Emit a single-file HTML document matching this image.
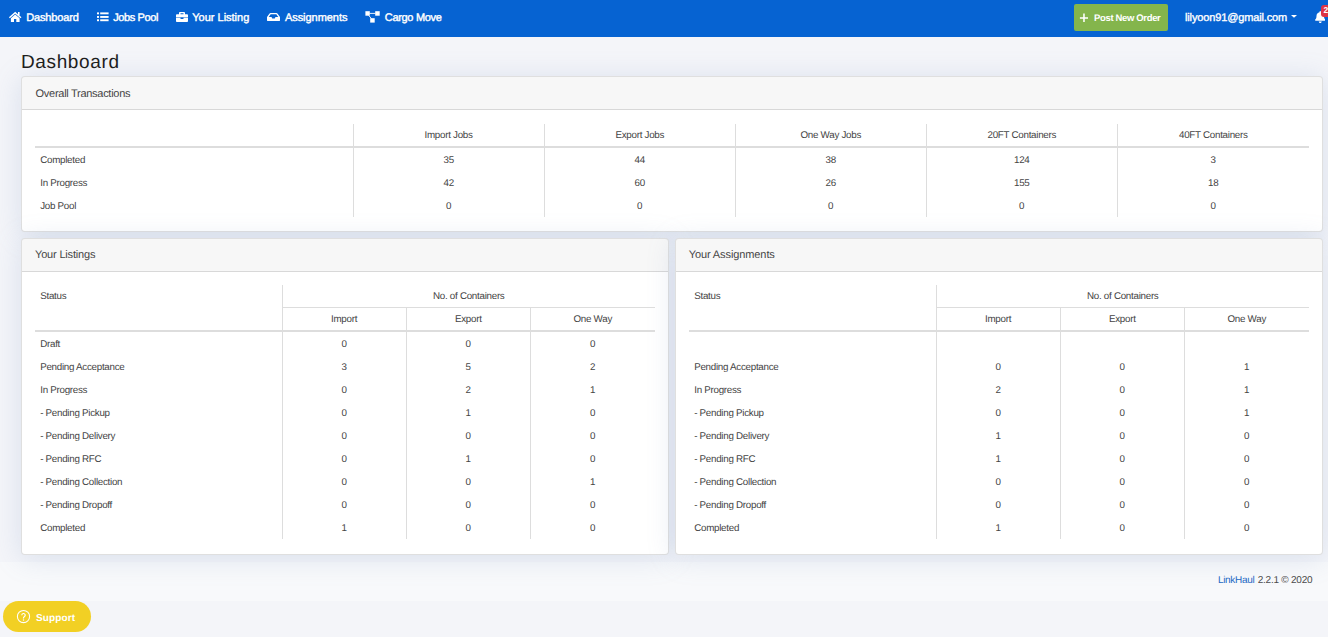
<!DOCTYPE html>
<html><head><meta charset="utf-8"><style>
*{margin:0;padding:0;box-sizing:border-box}
html,body{width:1328px;height:637px;overflow:hidden}
body{font-family:"Liberation Sans",sans-serif;background:#f4f5f9;position:relative;text-rendering:geometricPrecision}
.abs{position:absolute}
.t{position:absolute;line-height:20px;white-space:nowrap}
#nav{position:absolute;left:0;top:0;width:1328px;height:37px;background:#0663d2}
.card{position:absolute;background:#fff;border:1px solid rgba(0,0,0,0.125);border-radius:4px;box-shadow:0 3px 28px rgba(120,145,192,0.22)}
.ch{position:absolute;left:0;top:0;right:0;height:33px;background:rgba(0,0,0,0.03);border-bottom:1px solid rgba(0,0,0,0.125);border-radius:3px 3px 0 0}
</style></head><body>
<div class="abs" style="left:0;top:562px;width:1328px;height:39px;background:#f8f9fb"></div>
<div id="nav">
<svg class="abs" style="left:8px;top:11px" width="15" height="12" viewBox="8 11 15 12"><g fill="#fff"><path d="M9.4 17.7L15.2 12.8L21 17.7" fill="none" stroke="#fff" stroke-width="1.45"/><rect x="18" y="12" width="1.6" height="3.4"/><path d="M10.9 18.3L15.2 14.5L19.6 18.3V21.9H16.3V19.1H14V21.9H10.9Z"/></g></svg>
<svg class="abs" style="left:96px;top:11px" width="14" height="12" viewBox="96 11 14 12"><g fill="#fff"><rect x="97" y="12.4" width="2" height="1.9"/><rect x="97" y="16" width="2" height="1.9"/><rect x="97" y="19.3" width="2" height="1.9"/><rect x="100.2" y="12.4" width="8.4" height="1.9"/><rect x="100.2" y="16" width="8.4" height="1.9"/><rect x="100.2" y="19.3" width="8.4" height="1.9"/></g></svg>
<svg class="abs" style="left:176px;top:12px" width="12" height="10" viewBox="0 0 512 480" preserveAspectRatio="none"><path fill="#fff" d="M320 320c0 8.84-7.16 16-16 16h-96c-8.84 0-16-7.16-16-16v-40H0v152c0 25.6 22.4 48 48 48h416c25.6 0 48-22.4 48-48V280H320v40zm144-216h-80V48c0-25.6-22.4-48-48-48H176c-25.6 0-48 22.4-48 48v56H48c-25.6 0-48 22.4-48 48v104h512V152c0-25.6-22.4-48-48-48zm-144 0H192V64h128v40z"/></svg>
<svg class="abs" style="left:267px;top:12.7px" width="13" height="8.2" viewBox="0 64 576 384" preserveAspectRatio="none"><path fill="#fff" d="M567.938 243.908L462.25 85.374A48.003 48.003 0 0 0 422.311 64H153.689a48 48 0 0 0-39.938 21.374L8.062 243.908A47.994 47.994 0 0 0 0 270.533V400c0 26.51 21.49 48 48 48h480c26.51 0 48-21.49 48-48V270.533a47.994 47.994 0 0 0-8.062-26.625zM162.252 128h251.497l85.333 128H376l-32 64H232l-32-64H76.918l85.334-128z"/></svg>
<svg class="abs" style="left:364px;top:10px" width="17" height="14" viewBox="364 10 17 14"><g fill="#fff"><rect x="365.4" y="11.2" width="4.4" height="4.5"/><rect x="375.2" y="11.2" width="4.5" height="4.5"/><rect x="370.2" y="18.2" width="4.5" height="4.4"/></g><g stroke="#fff" stroke-width="0.9" fill="none"><path d="M369.5 13.4H375.5"/><path d="M368.6 15.3L371.4 18.6"/></g></svg>
<div class="abs" style="left:1074px;top:4px;width:94px;height:27px;background:#84b54c;border-radius:2px"></div>
<svg class="abs" style="left:1079px;top:13px" width="10" height="10" viewBox="1079 13 10 10"><path fill="#fff" d="M1083.2 13.6h1.55v3.6h3.25v1.55h-3.25v3.2h-1.55v-3.2h-3.3v-1.55h3.3z"/></svg>
<svg class="abs" style="left:1290px;top:14px" width="8" height="5" viewBox="1290 14 8 5"><path fill="#fff" d="M1291 15h6l-3 2.8z"/></svg>
<svg class="abs" style="left:1314.5px;top:11px" width="10.5" height="12" viewBox="0 0 448 512" preserveAspectRatio="none"><path fill="#fff" d="M224 512c35.32 0 63.970-28.65 63.97-64H160.03c0 35.35 28.65 64 63.97 64zm215.39-149.71c-19.32-20.76-55.47-51.99-55.47-154.29 0-77.7-54.48-139.9-127.94-155.16V32c0-17.67-14.32-32-31.98-32s-31.98 14.33-31.98 32v20.84C118.56 68.1 64.08 130.3 64.08 208c0 102.3-36.15 133.53-55.47 154.29-6 6.45-8.66 14.16-8.61 21.710.11 16.4 12.98 32 32.1 32h383.8c19.12 0 32-15.6 32.1-32 .05-7.55-2.61-15.27-8.61-21.71z"/></svg>
<div class="abs" style="left:1321px;top:5px;width:12px;height:12px;background:#dc3545;border-radius:3px"></div>
<div class="t" style="left:1323.5px;top:0px;font-size:8.5px;font-weight:700;color:#fff;line-height:20px;">2</div>
</div>
<div class="card" style="left:21px;top:76px;width:1302px;height:156px"><div class="ch"></div></div>
<div class="card" style="left:21px;top:238px;width:648px;height:317px"><div class="ch"></div></div>
<div class="card" style="left:675px;top:238px;width:648px;height:317px"><div class="ch"></div></div>
<div style="position:absolute;left:35px;top:146px;width:1274px;height:2px;background:#dddddd"></div><div style="position:absolute;left:353px;top:124px;width:1px;height:93px;background:#dddddd"></div><div style="position:absolute;left:544px;top:124px;width:1px;height:93px;background:#dddddd"></div><div style="position:absolute;left:735px;top:124px;width:1px;height:93px;background:#dddddd"></div><div style="position:absolute;left:926px;top:124px;width:1px;height:93px;background:#dddddd"></div><div style="position:absolute;left:1117px;top:124px;width:1px;height:93px;background:#dddddd"></div><div style="position:absolute;left:282px;top:285px;width:1px;height:254px;background:#dddddd"></div><div style="position:absolute;left:282px;top:307px;width:373px;height:1px;background:#dddddd"></div><div style="position:absolute;left:406px;top:308px;width:1px;height:231px;background:#dddddd"></div><div style="position:absolute;left:530px;top:308px;width:1px;height:231px;background:#dddddd"></div><div style="position:absolute;left:35px;top:330px;width:620px;height:2px;background:#dddddd"></div><div style="position:absolute;left:936px;top:285px;width:1px;height:254px;background:#dddddd"></div><div style="position:absolute;left:936px;top:307px;width:373px;height:1px;background:#dddddd"></div><div style="position:absolute;left:1060px;top:308px;width:1px;height:231px;background:#dddddd"></div><div style="position:absolute;left:1184px;top:308px;width:1px;height:231px;background:#dddddd"></div><div style="position:absolute;left:689px;top:330px;width:620px;height:2px;background:#dddddd"></div>

<div class="abs" style="left:3px;top:601px;width:88px;height:31px;background:#f2d024;border-radius:15.5px"></div>
<svg class="abs" style="left:16px;top:609px" width="15" height="15" viewBox="16 609 15 15"><circle cx="23.5" cy="616.5" r="6.1" fill="none" stroke="#fff" stroke-width="1.05"/><path d="M21.8 615.2a1.7 1.7 0 1 1 2.5 1.5c-.55.3-.8.6-.8 1.2v.5" fill="none" stroke="#fff" stroke-width="1.2"/><circle cx="23.5" cy="619.9" r=".75" fill="#fff"/></svg>

<div class="t" style="left:26.20px;top:8px;font-size:11px;font-weight:400;color:#ffffff;letter-spacing:-0.138px;-webkit-text-stroke:0.4px #fff">Dashboard</div><div class="t" style="left:113.20px;top:8px;font-size:11px;font-weight:400;color:#ffffff;letter-spacing:-0.388px;-webkit-text-stroke:0.4px #fff">Jobs Pool</div><div class="t" style="left:192.30px;top:8px;font-size:11px;font-weight:400;color:#ffffff;letter-spacing:-0.009px;-webkit-text-stroke:0.4px #fff">Your Listing</div><div class="t" style="left:284.90px;top:8px;font-size:11px;font-weight:400;color:#ffffff;letter-spacing:-0.040px;-webkit-text-stroke:0.4px #fff">Assignments</div><div class="t" style="left:384.80px;top:8px;font-size:11px;font-weight:400;color:#ffffff;letter-spacing:-0.322px;-webkit-text-stroke:0.4px #fff">Cargo Move</div><div class="t" style="left:1094.00px;top:9px;font-size:9.5px;font-weight:700;color:#ffffff;letter-spacing:-0.346px;">Post New Order</div><div class="t" style="left:1185.00px;top:8px;font-size:11px;font-weight:400;color:#ffffff;letter-spacing:-0.139px;-webkit-text-stroke:0.35px #fff">lilyoon91@gmail.com</div><div class="t" style="left:21.00px;top:53px;font-size:19px;font-weight:400;color:#1e1e1e;letter-spacing:0.625px;">Dashboard</div><div class="t" style="left:35.60px;top:84px;font-size:11px;font-weight:400;color:#454545;letter-spacing:-0.284px;">Overall Transactions</div><div class="t" style="left:35.00px;top:245px;font-size:11px;font-weight:400;color:#454545;letter-spacing:-0.175px;">Your Listings</div><div class="t" style="left:688.70px;top:245px;font-size:11px;font-weight:400;color:#454545;letter-spacing:-0.100px;">Your Assignments</div><div class="t" style="left:424.50px;top:126px;font-size:9.8px;font-weight:400;color:#444444;letter-spacing:-0.280px;">Import Jobs</div><div class="t" style="left:615.50px;top:126px;font-size:9.8px;font-weight:400;color:#444444;letter-spacing:-0.280px;">Export Jobs</div><div class="t" style="left:800.50px;top:126px;font-size:9.8px;font-weight:400;color:#444444;letter-spacing:-0.280px;">One Way Jobs</div><div class="t" style="left:987.50px;top:126px;font-size:9.8px;font-weight:400;color:#444444;letter-spacing:-0.280px;">20FT Containers</div><div class="t" style="left:1179.00px;top:126px;font-size:9.8px;font-weight:400;color:#444444;letter-spacing:-0.280px;">40FT Containers</div><div class="t" style="left:40.20px;top:151px;font-size:9.8px;font-weight:400;color:#444444;letter-spacing:-0.280px;">Completed</div><div class="t" style="left:443.50px;top:151px;font-size:9.8px;font-weight:400;color:#444444;letter-spacing:-0.280px;">35</div><div class="t" style="left:634.50px;top:151px;font-size:9.8px;font-weight:400;color:#444444;letter-spacing:-0.280px;">44</div><div class="t" style="left:825.50px;top:151px;font-size:9.8px;font-weight:400;color:#444444;letter-spacing:-0.280px;">38</div><div class="t" style="left:1014.00px;top:151px;font-size:9.8px;font-weight:400;color:#444444;letter-spacing:-0.280px;">124</div><div class="t" style="left:1210.50px;top:151px;font-size:9.8px;font-weight:400;color:#444444;letter-spacing:-0.280px;">3</div><div class="t" style="left:40.20px;top:174px;font-size:9.8px;font-weight:400;color:#444444;letter-spacing:-0.280px;">In Progress</div><div class="t" style="left:443.50px;top:174px;font-size:9.8px;font-weight:400;color:#444444;letter-spacing:-0.280px;">42</div><div class="t" style="left:634.50px;top:174px;font-size:9.8px;font-weight:400;color:#444444;letter-spacing:-0.280px;">60</div><div class="t" style="left:825.50px;top:174px;font-size:9.8px;font-weight:400;color:#444444;letter-spacing:-0.280px;">26</div><div class="t" style="left:1014.00px;top:174px;font-size:9.8px;font-weight:400;color:#444444;letter-spacing:-0.280px;">155</div><div class="t" style="left:1208.00px;top:174px;font-size:9.8px;font-weight:400;color:#444444;letter-spacing:-0.280px;">18</div><div class="t" style="left:40.20px;top:197px;font-size:9.8px;font-weight:400;color:#444444;letter-spacing:-0.280px;">Job Pool</div><div class="t" style="left:446.00px;top:197px;font-size:9.8px;font-weight:400;color:#444444;letter-spacing:-0.280px;">0</div><div class="t" style="left:637.00px;top:197px;font-size:9.8px;font-weight:400;color:#444444;letter-spacing:-0.280px;">0</div><div class="t" style="left:828.00px;top:197px;font-size:9.8px;font-weight:400;color:#444444;letter-spacing:-0.280px;">0</div><div class="t" style="left:1019.00px;top:197px;font-size:9.8px;font-weight:400;color:#444444;letter-spacing:-0.280px;">0</div><div class="t" style="left:1210.50px;top:197px;font-size:9.8px;font-weight:400;color:#444444;letter-spacing:-0.280px;">0</div><div class="t" style="left:40.20px;top:287px;font-size:9.8px;font-weight:400;color:#444444;letter-spacing:-0.280px;">Status</div><div class="t" style="left:433.00px;top:287px;font-size:9.8px;font-weight:400;color:#444444;letter-spacing:-0.280px;">No. of Containers</div><div class="t" style="left:331.00px;top:310px;font-size:9.8px;font-weight:400;color:#444444;letter-spacing:-0.280px;">Import</div><div class="t" style="left:455.00px;top:310px;font-size:9.8px;font-weight:400;color:#444444;letter-spacing:-0.280px;">Export</div><div class="t" style="left:573.50px;top:310px;font-size:9.8px;font-weight:400;color:#444444;letter-spacing:-0.280px;">One Way</div><div class="t" style="left:40.20px;top:335px;font-size:9.8px;font-weight:400;color:#444444;letter-spacing:-0.280px;">Draft</div><div class="t" style="left:341.50px;top:335px;font-size:9.8px;font-weight:400;color:#444444;letter-spacing:-0.280px;">0</div><div class="t" style="left:465.50px;top:335px;font-size:9.8px;font-weight:400;color:#444444;letter-spacing:-0.280px;">0</div><div class="t" style="left:590.00px;top:335px;font-size:9.8px;font-weight:400;color:#444444;letter-spacing:-0.280px;">0</div><div class="t" style="left:40.20px;top:358px;font-size:9.8px;font-weight:400;color:#444444;letter-spacing:-0.280px;">Pending Acceptance</div><div class="t" style="left:341.50px;top:358px;font-size:9.8px;font-weight:400;color:#444444;letter-spacing:-0.280px;">3</div><div class="t" style="left:465.50px;top:358px;font-size:9.8px;font-weight:400;color:#444444;letter-spacing:-0.280px;">5</div><div class="t" style="left:590.00px;top:358px;font-size:9.8px;font-weight:400;color:#444444;letter-spacing:-0.280px;">2</div><div class="t" style="left:40.20px;top:381px;font-size:9.8px;font-weight:400;color:#444444;letter-spacing:-0.280px;">In Progress</div><div class="t" style="left:341.50px;top:381px;font-size:9.8px;font-weight:400;color:#444444;letter-spacing:-0.280px;">0</div><div class="t" style="left:465.50px;top:381px;font-size:9.8px;font-weight:400;color:#444444;letter-spacing:-0.280px;">2</div><div class="t" style="left:590.00px;top:381px;font-size:9.8px;font-weight:400;color:#444444;letter-spacing:-0.280px;">1</div><div class="t" style="left:40.20px;top:404px;font-size:9.8px;font-weight:400;color:#444444;letter-spacing:-0.280px;">- Pending Pickup</div><div class="t" style="left:341.50px;top:404px;font-size:9.8px;font-weight:400;color:#444444;letter-spacing:-0.280px;">0</div><div class="t" style="left:465.50px;top:404px;font-size:9.8px;font-weight:400;color:#444444;letter-spacing:-0.280px;">1</div><div class="t" style="left:590.00px;top:404px;font-size:9.8px;font-weight:400;color:#444444;letter-spacing:-0.280px;">0</div><div class="t" style="left:40.20px;top:427px;font-size:9.8px;font-weight:400;color:#444444;letter-spacing:-0.280px;">- Pending Delivery</div><div class="t" style="left:341.50px;top:427px;font-size:9.8px;font-weight:400;color:#444444;letter-spacing:-0.280px;">0</div><div class="t" style="left:465.50px;top:427px;font-size:9.8px;font-weight:400;color:#444444;letter-spacing:-0.280px;">0</div><div class="t" style="left:590.00px;top:427px;font-size:9.8px;font-weight:400;color:#444444;letter-spacing:-0.280px;">0</div><div class="t" style="left:40.20px;top:450px;font-size:9.8px;font-weight:400;color:#444444;letter-spacing:-0.280px;">- Pending RFC</div><div class="t" style="left:341.50px;top:450px;font-size:9.8px;font-weight:400;color:#444444;letter-spacing:-0.280px;">0</div><div class="t" style="left:465.50px;top:450px;font-size:9.8px;font-weight:400;color:#444444;letter-spacing:-0.280px;">1</div><div class="t" style="left:590.00px;top:450px;font-size:9.8px;font-weight:400;color:#444444;letter-spacing:-0.280px;">0</div><div class="t" style="left:40.20px;top:473px;font-size:9.8px;font-weight:400;color:#444444;letter-spacing:-0.280px;">- Pending Collection</div><div class="t" style="left:341.50px;top:473px;font-size:9.8px;font-weight:400;color:#444444;letter-spacing:-0.280px;">0</div><div class="t" style="left:465.50px;top:473px;font-size:9.8px;font-weight:400;color:#444444;letter-spacing:-0.280px;">0</div><div class="t" style="left:590.00px;top:473px;font-size:9.8px;font-weight:400;color:#444444;letter-spacing:-0.280px;">1</div><div class="t" style="left:40.20px;top:496px;font-size:9.8px;font-weight:400;color:#444444;letter-spacing:-0.280px;">- Pending Dropoff</div><div class="t" style="left:341.50px;top:496px;font-size:9.8px;font-weight:400;color:#444444;letter-spacing:-0.280px;">0</div><div class="t" style="left:465.50px;top:496px;font-size:9.8px;font-weight:400;color:#444444;letter-spacing:-0.280px;">0</div><div class="t" style="left:590.00px;top:496px;font-size:9.8px;font-weight:400;color:#444444;letter-spacing:-0.280px;">0</div><div class="t" style="left:40.20px;top:519px;font-size:9.8px;font-weight:400;color:#444444;letter-spacing:-0.280px;">Completed</div><div class="t" style="left:341.50px;top:519px;font-size:9.8px;font-weight:400;color:#444444;letter-spacing:-0.280px;">1</div><div class="t" style="left:465.50px;top:519px;font-size:9.8px;font-weight:400;color:#444444;letter-spacing:-0.280px;">0</div><div class="t" style="left:590.00px;top:519px;font-size:9.8px;font-weight:400;color:#444444;letter-spacing:-0.280px;">0</div><div class="t" style="left:694.20px;top:287px;font-size:9.8px;font-weight:400;color:#444444;letter-spacing:-0.280px;">Status</div><div class="t" style="left:1087.00px;top:287px;font-size:9.8px;font-weight:400;color:#444444;letter-spacing:-0.280px;">No. of Containers</div><div class="t" style="left:985.00px;top:310px;font-size:9.8px;font-weight:400;color:#444444;letter-spacing:-0.280px;">Import</div><div class="t" style="left:1109.00px;top:310px;font-size:9.8px;font-weight:400;color:#444444;letter-spacing:-0.280px;">Export</div><div class="t" style="left:1227.50px;top:310px;font-size:9.8px;font-weight:400;color:#444444;letter-spacing:-0.280px;">One Way</div><div class="t" style="left:694.20px;top:358px;font-size:9.8px;font-weight:400;color:#444444;letter-spacing:-0.280px;">Pending Acceptance</div><div class="t" style="left:995.50px;top:358px;font-size:9.8px;font-weight:400;color:#444444;letter-spacing:-0.280px;">0</div><div class="t" style="left:1119.50px;top:358px;font-size:9.8px;font-weight:400;color:#444444;letter-spacing:-0.280px;">0</div><div class="t" style="left:1244.00px;top:358px;font-size:9.8px;font-weight:400;color:#444444;letter-spacing:-0.280px;">1</div><div class="t" style="left:694.20px;top:381px;font-size:9.8px;font-weight:400;color:#444444;letter-spacing:-0.280px;">In Progress</div><div class="t" style="left:995.50px;top:381px;font-size:9.8px;font-weight:400;color:#444444;letter-spacing:-0.280px;">2</div><div class="t" style="left:1119.50px;top:381px;font-size:9.8px;font-weight:400;color:#444444;letter-spacing:-0.280px;">0</div><div class="t" style="left:1244.00px;top:381px;font-size:9.8px;font-weight:400;color:#444444;letter-spacing:-0.280px;">1</div><div class="t" style="left:694.20px;top:404px;font-size:9.8px;font-weight:400;color:#444444;letter-spacing:-0.280px;">- Pending Pickup</div><div class="t" style="left:995.50px;top:404px;font-size:9.8px;font-weight:400;color:#444444;letter-spacing:-0.280px;">0</div><div class="t" style="left:1119.50px;top:404px;font-size:9.8px;font-weight:400;color:#444444;letter-spacing:-0.280px;">0</div><div class="t" style="left:1244.00px;top:404px;font-size:9.8px;font-weight:400;color:#444444;letter-spacing:-0.280px;">1</div><div class="t" style="left:694.20px;top:427px;font-size:9.8px;font-weight:400;color:#444444;letter-spacing:-0.280px;">- Pending Delivery</div><div class="t" style="left:995.50px;top:427px;font-size:9.8px;font-weight:400;color:#444444;letter-spacing:-0.280px;">1</div><div class="t" style="left:1119.50px;top:427px;font-size:9.8px;font-weight:400;color:#444444;letter-spacing:-0.280px;">0</div><div class="t" style="left:1244.00px;top:427px;font-size:9.8px;font-weight:400;color:#444444;letter-spacing:-0.280px;">0</div><div class="t" style="left:694.20px;top:450px;font-size:9.8px;font-weight:400;color:#444444;letter-spacing:-0.280px;">- Pending RFC</div><div class="t" style="left:995.50px;top:450px;font-size:9.8px;font-weight:400;color:#444444;letter-spacing:-0.280px;">1</div><div class="t" style="left:1119.50px;top:450px;font-size:9.8px;font-weight:400;color:#444444;letter-spacing:-0.280px;">0</div><div class="t" style="left:1244.00px;top:450px;font-size:9.8px;font-weight:400;color:#444444;letter-spacing:-0.280px;">0</div><div class="t" style="left:694.20px;top:473px;font-size:9.8px;font-weight:400;color:#444444;letter-spacing:-0.280px;">- Pending Collection</div><div class="t" style="left:995.50px;top:473px;font-size:9.8px;font-weight:400;color:#444444;letter-spacing:-0.280px;">0</div><div class="t" style="left:1119.50px;top:473px;font-size:9.8px;font-weight:400;color:#444444;letter-spacing:-0.280px;">0</div><div class="t" style="left:1244.00px;top:473px;font-size:9.8px;font-weight:400;color:#444444;letter-spacing:-0.280px;">0</div><div class="t" style="left:694.20px;top:496px;font-size:9.8px;font-weight:400;color:#444444;letter-spacing:-0.280px;">- Pending Dropoff</div><div class="t" style="left:995.50px;top:496px;font-size:9.8px;font-weight:400;color:#444444;letter-spacing:-0.280px;">0</div><div class="t" style="left:1119.50px;top:496px;font-size:9.8px;font-weight:400;color:#444444;letter-spacing:-0.280px;">0</div><div class="t" style="left:1244.00px;top:496px;font-size:9.8px;font-weight:400;color:#444444;letter-spacing:-0.280px;">0</div><div class="t" style="left:694.20px;top:519px;font-size:9.8px;font-weight:400;color:#444444;letter-spacing:-0.280px;">Completed</div><div class="t" style="left:995.50px;top:519px;font-size:9.8px;font-weight:400;color:#444444;letter-spacing:-0.280px;">1</div><div class="t" style="left:1119.50px;top:519px;font-size:9.8px;font-weight:400;color:#444444;letter-spacing:-0.280px;">0</div><div class="t" style="left:1244.00px;top:519px;font-size:9.8px;font-weight:400;color:#444444;letter-spacing:-0.280px;">0</div><div class="t" style="left:1217.90px;top:571px;font-size:10px;font-weight:400;color:#1d68c4;letter-spacing:-0.314px;">LinkHaul</div><div class="t" style="left:1257.70px;top:571px;font-size:10px;font-weight:400;color:#4a4a4a;letter-spacing:-0.227px;">2.2.1 © 2020</div><div class="t" style="left:36.10px;top:609px;font-size:10px;font-weight:700;color:#ffffff;letter-spacing:0.100px;">Support</div>
</body></html>
